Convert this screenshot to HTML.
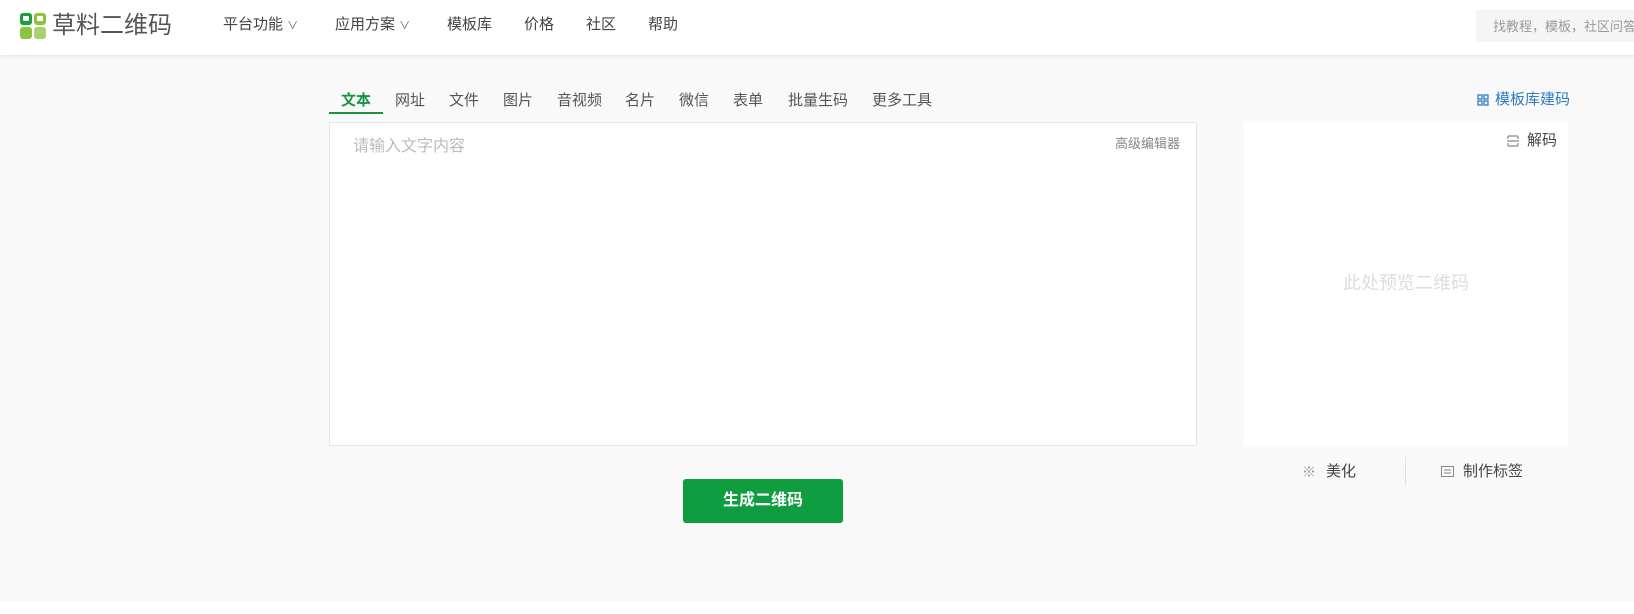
<!DOCTYPE html>
<html><head><meta charset="utf-8"><style>
*{margin:0;padding:0;box-sizing:border-box}
body{width:1634px;height:614px;background:#fff;font-family:"Liberation Sans","Noto Sans CJK SC",sans-serif;position:relative;overflow:hidden;color:#333}
.a{position:absolute;white-space:nowrap;line-height:1}
#hd{position:absolute;left:0;top:0;width:1634px;height:55px;background:#fff;box-shadow:0 1px 4px rgba(0,0,0,.1);z-index:2}
#bg{position:absolute;left:0;top:55px;width:1634px;height:546px;background:#f9f9f9}
.nav{font-size:15px;color:#444;top:17px}
.tab{font-size:15px;color:#555;top:93px}
</style></head><body>
<div id="bg"></div>
<div id="hd">
<svg class="a" style="left:20px;top:13px" width="26" height="26" viewBox="0 0 26 26">
<rect x="0" y="0" width="12" height="12" rx="3" fill="#1a9e3f"/><rect x="3" y="3" width="6" height="5" rx="1" fill="#fff"/>
<rect x="14" y="0" width="12" height="12" rx="3" fill="#8cc43f"/><rect x="17" y="3" width="6" height="5" rx="1" fill="#fff"/>
<rect x="0" y="14" width="12" height="12" rx="3" fill="#8cc43f"/>
<rect x="14" y="14" width="12" height="12" rx="3" fill="#a8d36a"/>
</svg>
<div class="a" style="left:52px;top:14px;font-size:24px;color:#555">草料二维码</div>
<div class="a nav" style="left:223px">平台功能 <span style="font-size:11px;color:#666">&#8744;</span></div>
<div class="a nav" style="left:335px">应用方案 <span style="font-size:11px;color:#666">&#8744;</span></div>
<div class="a nav" style="left:447px">模板库</div>
<div class="a nav" style="left:524px">价格</div>
<div class="a nav" style="left:586px">社区</div>
<div class="a nav" style="left:648px">帮助</div>
<div class="a" style="left:1476px;top:10px;width:158px;height:32px;background:#f5f5f5"></div>
<div class="a" style="left:1493px;top:20px;font-size:13px;color:#999">找教程，模板，社区问答</div>
</div>
<div class="a tab" style="left:341px;color:#1a9441;font-weight:bold">文本</div>
<div class="a" style="left:329px;top:112px;width:54px;height:2px;background:#1a9441"></div>
<div class="a tab" style="left:395px">网址</div>
<div class="a tab" style="left:449px">文件</div>
<div class="a tab" style="left:503px">图片</div>
<div class="a tab" style="left:557px">音视频</div>
<div class="a tab" style="left:625px">名片</div>
<div class="a tab" style="left:679px">微信</div>
<div class="a tab" style="left:733px">表单</div>
<div class="a tab" style="left:788px">批量生码</div>
<div class="a tab" style="left:872px">更多工具</div>
<svg class="a" style="left:1477px;top:94px" width="12" height="12" viewBox="0 0 12 12" fill="none" stroke="#2d7cc4" stroke-width="1.3"><rect x="1" y="1" width="4" height="4"/><rect x="7" y="1" width="4" height="4"/><rect x="1" y="7" width="4" height="4"/><rect x="7" y="7" width="4" height="4"/></svg>
<div class="a" style="left:1495px;top:92px;font-size:15px;color:#2d7cc4">模板库建码</div>
<div class="a" style="left:329px;top:122px;width:868px;height:324px;background:#fff;border:1px solid #e5e5e5"></div>
<div class="a" style="left:353px;top:139px;font-size:16px;color:#bbb">请输入文字内容</div>
<div class="a" style="left:1115px;top:137px;font-size:13px;color:#888">高级编辑器</div>
<div class="a" style="left:1244px;top:122px;width:324px;height:324px;background:#fff"></div>
<svg class="a" style="left:1507px;top:135px" width="12" height="12" viewBox="0 0 12 12" fill="none" stroke="#888" stroke-width="1.2"><path d="M1 4V2Q1 1 2 1H10Q11 1 11 2V4M1 8V10Q1 11 2 11H10Q11 11 11 10V8M0 6H12"/></svg>
<div class="a" style="left:1527px;top:133px;font-size:15px;color:#444">解码</div>
<div class="a" style="left:1343px;top:274px;font-size:18px;color:#ddd">此处预览二维码</div>
<div class="a" style="left:683px;top:479px;width:160px;height:44px;background:#0f9d3f;border-radius:3px;color:#fff;font-size:16px;line-height:44px;text-align:center;font-weight:bold">生成二维码</div>
<div class="a" style="left:1302px;top:465px;font-size:14px;color:#999">&#8251;</div>
<div class="a" style="left:1326px;top:464px;font-size:15px;color:#444">美化</div>
<div class="a" style="left:1405px;top:457px;width:1px;height:28px;background:#e0e0e0"></div>
<svg class="a" style="left:1441px;top:466px" width="13" height="11" viewBox="0 0 13 11" fill="none" stroke="#888" stroke-width="1"><rect x="0.5" y="0.5" width="12" height="10"/><path d="M3 4H10M3 7H10"/></svg>
<div class="a" style="left:1463px;top:464px;font-size:15px;color:#444">制作标签</div>
</body></html>
